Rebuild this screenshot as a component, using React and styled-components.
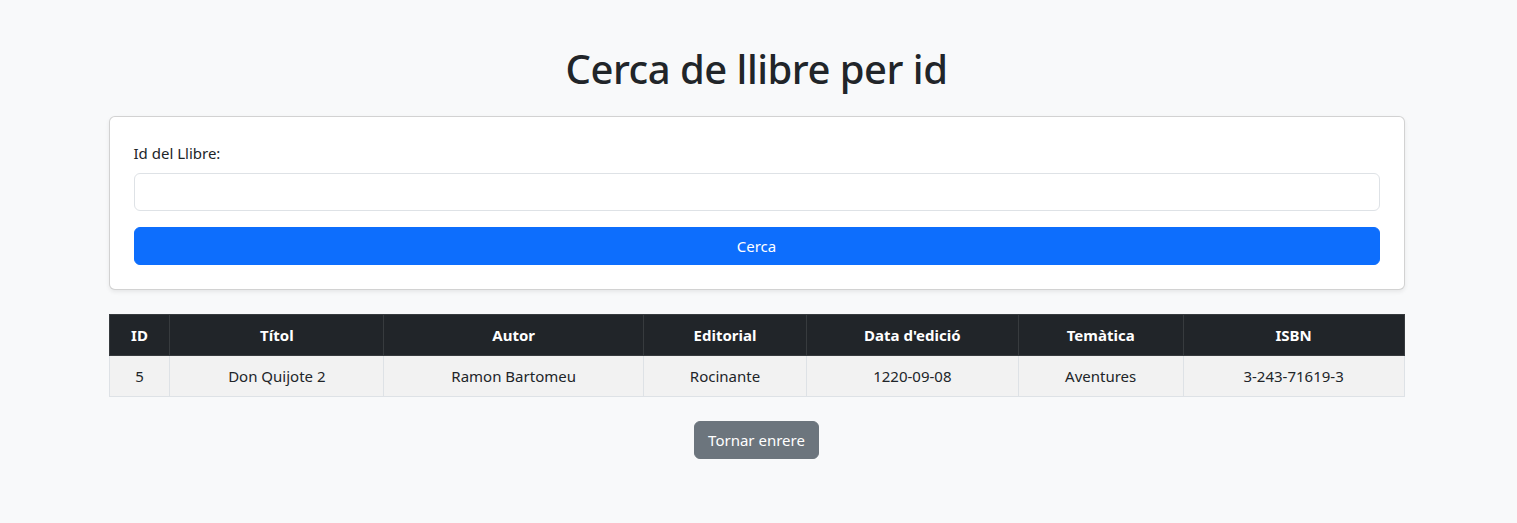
import React from "react";
import styled, { createGlobalStyle } from "styled-components";

const Global = createGlobalStyle`
  html, body { margin: 0; padding: 0; }
  body {
    background: #f8f9fa;
    color: #212529;
    font-family: "Noto Sans", "Open Sans", sans-serif;
    font-size: 16px;
    line-height: 1.5;
  }
  * { box-sizing: border-box; }
`;

const Container = styled.div`
  max-width: 1320px;
  margin: 0 auto;
  padding: 45px 14px 24px 10px;
`;

const Title = styled.h1`
  margin: 0 0 23px;
  font-size: 40px;
  font-weight: 500;
  line-height: 48px;
  text-align: center;
  letter-spacing: -0.5px;
`;

const Card = styled.form`
  background: #fff;
  border: 1px solid rgba(0, 0, 0, 0.175);
  border-radius: 6px;
  box-shadow: 0 2px 4px rgba(0, 0, 0, 0.075);
  padding: 24px;
  margin-bottom: 24px;
  display: flex;
  flex-direction: column;
`;

const Label = styled.label`
  display: block;
  margin-bottom: 8px;
  font-size: 15px;
  line-height: 24px;
`;

const Input = styled.input`
  display: block;
  width: 100%;
  height: 38px;
  padding: 6px 12px;
  font: inherit;
  border: 1px solid #dee2e6;
  border-radius: 6px;
  background: #fff;
  margin-bottom: 16px;
  outline: none;
`;

const Button = styled.button`
  display: ${(p) => (p.$block ? "block" : "inline-block")};
  width: ${(p) => (p.$block ? "100%" : "auto")};
  height: 38px;
  padding: 6px ${(p) => (p.$block ? "12px" : "13px")};
  font-family: inherit;
  font-size: 15px;
  line-height: 24px;
  color: #fff;
  background: ${(p) => (p.$variant === "secondary" ? "#6c757d" : "#0d6efd")};
  border: 1px solid ${(p) => (p.$variant === "secondary" ? "#6c757d" : "#0d6efd")};
  border-radius: 6px;
  cursor: pointer;
`;

const Table = styled.table`
  width: 100%;
  border-collapse: collapse;
  margin-bottom: 24px;
  font-size: 15px;
`;

const Th = styled.th`
  background: #212529;
  color: #fff;
  font-weight: 700;
  text-align: center;
  padding: 8px;
  line-height: 24px;
  border: 1px solid #373b3e;
`;

const Td = styled.td`
  background: #f2f2f2;
  text-align: center;
  padding: 8px;
  line-height: 24px;
  border: 1px solid #dee2e6;
`;

const Center = styled.div`
  display: flex;
  justify-content: center;
`;

const cols = [
  ["ID", 61],
  ["Títol", 214],
  ["Autor", 260],
  ["Editorial", 163],
  ["Data d'edició", 212],
  ["Temàtica", 165],
  ["ISBN", 221],
];

const row = ["5", "Don Quijote 2", "Ramon Bartomeu", "Rocinante", "1220-09-08", "Aventures", "3-243-71619-3"];

export default function App() {
  return (
    <>
      <Global />
      <Container>
        <Title>Cerca de llibre per id</Title>
        <Card onSubmit={(e) => e.preventDefault()}>
          <Label htmlFor="id">Id del Llibre:</Label>
          <Input id="id" type="text" />
          <Button $block type="submit">Cerca</Button>
        </Card>
        <Table>
          <colgroup>
            {cols.map(([n, w]) => (
              <col key={n} style={{ width: `${w}px` }} />
            ))}
          </colgroup>
          <thead>
            <tr>
              {cols.map(([n]) => (
                <Th key={n}>{n}</Th>
              ))}
            </tr>
          </thead>
          <tbody>
            <tr>
              {row.map((v, i) => (
                <Td key={i}>{v}</Td>
              ))}
            </tr>
          </tbody>
        </Table>
        <Center>
          <Button $variant="secondary" type="button">Tornar enrere</Button>
        </Center>
      </Container>
    </>
  );
}
